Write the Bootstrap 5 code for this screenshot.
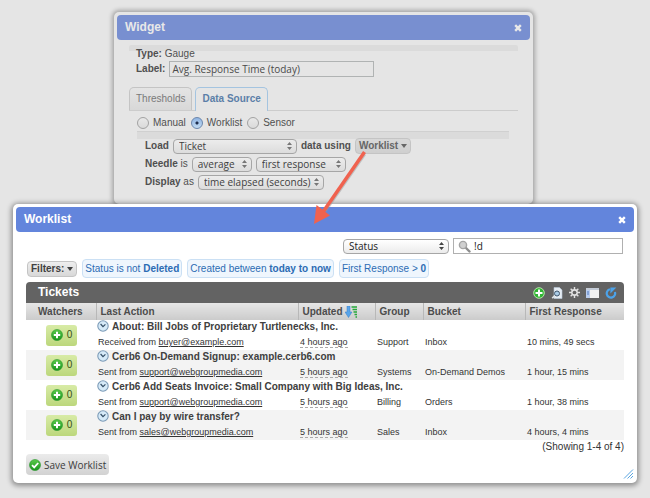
<!DOCTYPE html>
<html lang="en">
<head>
<meta charset="utf-8">
<meta name="viewport" content="width=device-width, initial-scale=1">
<title>Worklist</title>
<link href="https://cdn.jsdelivr.net/npm/bootstrap@5.3.0/dist/css/bootstrap.min.css" rel="stylesheet">
<style>
body{background:#e5e5e5;font:10px/14px "Liberation Sans",Arial,sans-serif;color:#505050}
.desk{padding:12px 13px 14px}
.win{border-radius:5px;padding:3px;box-shadow:0 1px 5px 2px rgba(0,0,0,.36)}
.win-widget{background:#e5e5e5;margin:0 104px 0 101px;padding:3px 3px 13px;box-shadow:0 0 4px 2px rgba(0,0,0,.28)}
.win-work{background:#fff}
.win-bar{height:25px;padding:0 8px;border-radius:4px;color:#fff;background:#6385dc}
.win-widget .win-bar{background:#788fd0;color:#e8e8e8}
.win-bar h2{font-size:12px;line-height:25px;font-weight:bold;margin:0}
.plain{border:0;background:none;padding:0;display:block;line-height:0}
.widget-body{padding:5px 12px 0}
.lines{padding:2px 7px 0;background:linear-gradient(#dbdbdb,#dbdbdb) no-repeat top/100% 6px;border-radius:2px}
.ui{font-family:"Open Sans","Noto Sans",sans-serif;font-size:10px}
.box-in{height:16px;border:1px solid #b0b3b3;border-radius:0;background:transparent;padding:0 2px;line-height:14px;color:#4a4a4a}
.w-label{width:205px}
.tabs{border-bottom:1px solid #ccc;gap:3px;margin-top:10px}
.tabs .nav-link{height:23px;line-height:22px;padding:0 6px;border:1px solid #c4c4c4;border-bottom:0;border-radius:5px 5px 0 0;color:#7a7a7a;background:linear-gradient(#e4e4e4,#d8d8d8);font-size:10px}
.tabs .nav-link.active{color:#5c7fa8;font-weight:bold;border-color:#a4c4e0;background:#e5e5e5;height:24px;margin-bottom:-1px}
.rad{appearance:none;width:12px;height:12px;margin:0 4px 0 0;border:1px solid #a2a2a2;border-radius:50%;background:linear-gradient(#e8e8e8,#dadada)}
.rad:checked{border-color:#6a86ac;background:radial-gradient(circle,#1d2d4c 0 1px,transparent 2px),linear-gradient(#8fb4e2,#c2dbf2)}
.radios{gap:5px;padding:4px 8px 0;height:20px}
.rules{margin:0 9px 0 8px;padding:5px 0 0;border-top:1px solid #d0d0d0;background:linear-gradient(#dbdbdb,#dbdbdb) no-repeat top/100% 7px}
.rule{height:18px;gap:4px;padding-left:8px}
.pick{appearance:none;height:15px;border:1px solid #a6a6a6;border-radius:4px;padding:0 12px 0 5px;line-height:13px;color:#3e3e3e;background:url("data:image/svg+xml,%3Csvg xmlns='http://www.w3.org/2000/svg' width='5' height='8'%3E%3Cpath d='M0 3L2.5 0 5 3zM0 5L2.5 8 5 5z' fill='%23777'/%3E%3C/svg%3E") no-repeat right 4px center,linear-gradient(#ececec,#dcdcdc)}
.win-work .pick{color:#222;background-image:url("data:image/svg+xml,%3Csvg xmlns='http://www.w3.org/2000/svg' width='5' height='8'%3E%3Cpath d='M0 3L2.5 0 5 3zM0 5L2.5 8 5 5z' fill='%23444'/%3E%3C/svg%3E"),linear-gradient(#fff,#ececec)}
.w-ticket{width:124px}.w-avg{width:60px}.w-first{width:90px}.w-time{width:126px}.w-status{width:106px}.w-search{width:170px}
.menu-btn{height:16px;border:1px solid #c4c4c4;border-radius:4px;background:linear-gradient(#d8d8d8,#cfcfcf);color:#666;font-weight:bold;line-height:14px;padding:0 3px}
.menu-btn::after{content:"";display:inline-block;border:3px solid transparent;border-top:4px solid currentColor;border-bottom:0;margin-left:3px;vertical-align:1px}
.win-work .menu-btn{background:linear-gradient(#eee,#d8d8d8);color:#404040;padding:0 3px}
.work-body{padding:6px 10px 0}
.search{position:relative;margin-right:1px}
.search svg{position:absolute;left:5px;top:2px}
.search .box-in{padding-left:20px;background:#fff;border-color:#b0b0b0;color:#222;display:block}
.filters{gap:5px;margin:5px 0 4px 1px}
.pill{height:19px;line-height:17px;border:1px solid #cbe0f4;border-radius:4px;background:#eff6fd;color:#2c6cb4;padding:0 2px;text-decoration:none}
.list-bar{height:21px;border-radius:4px 4px 0 0;background:#636363;color:#fff;padding:0 7px 0 12px}
.list-bar h3{font-size:12px;font-weight:bold;line-height:21px;margin:0}
.tools{gap:6px}
.tickets{table-layout:fixed;width:100%;font-size:9px;color:#333;line-height:14px}
.tickets th,.tickets td{padding:0 0 0 2px;white-space:nowrap;vertical-align:top}
.tickets thead th{height:17px;font-size:10px;color:#4c4c4c;background:linear-gradient(#e6e6e6,#cbcbcb);border-left:1px solid #b8b8b8;padding-left:4px;line-height:17px}
.tickets thead th:first-child{padding-left:12px;border-left:0}
.tickets tbody:nth-of-type(even){background:#f3f3f3}
.tickets tbody td,.tickets tbody th{height:15px}
.tickets .subj{font-size:10px;color:#404040;padding-left:1px}
.subj svg{vertical-align:-2px;margin-right:3px}
.tickets a{color:#333}
.tickets a:hover{color:#000}
.ago{border-bottom:1px dashed #aaa}
.c1{width:70px}.c3{width:77px}.c4{width:48px}.c5{width:102px}.c6{width:99px}
.tickets td.wcell{padding-left:20px;vertical-align:middle}
.watch{width:31px;height:21px;border:0;border-radius:3px;background:linear-gradient(#d8eba6,#bcd77c);color:#355018;font-size:10px;padding:0;gap:4px}
.save{height:21px;border:0;border-radius:4px;background:linear-gradient(#ebebeb,#d2d2d2);color:#3c3c3c;padding:0 3px;gap:3px}
.count{color:#333}
.grip{margin-top:-6px;height:11px;line-height:0}
.arrow{position:absolute;left:310px;top:145px;z-index:3;pointer-events:none}
.front{position:relative;z-index:1}
</style>
<script src="https://cdn.jsdelivr.net/npm/bootstrap@5.3.0/dist/js/bootstrap.bundle.min.js"></script>
</head>
<body>
<svg width="0" height="0" class="position-absolute" aria-hidden="true">
<defs>
<linearGradient id="gr" x2="0" y2="1"><stop stop-color="#5ccb4c"/><stop offset="1" stop-color="#17941c"/></linearGradient>
<symbol id="plus" viewBox="0 0 12 12"><circle cx="6" cy="6" r="5.5" fill="url(#gr)" stroke="#27922a" stroke-width=".6"/><path d="M6 2.8v6.4M2.8 6h6.4" stroke="#fff" stroke-width="2"/></symbol>
<symbol id="clock" viewBox="0 0 12 12"><circle cx="6" cy="6" r="5.2" fill="#d6eaf8" stroke="#7d9cb8" stroke-width="1.1"/><path d="M3.6 4L6 6.6 8.4 4.4" fill="none" stroke="#334d66" stroke-width="1.2"/></symbol>
<symbol id="close" viewBox="0 0 8 8"><path d="M1.2 1.2l5.6 5.6M6.8 1.2L1.2 6.8" stroke="currentColor" stroke-width="2.4"/></symbol>
</defs>
</svg>
<main class="desk position-relative">
<section class="win win-widget">
<header class="win-bar d-flex align-items-center justify-content-between"><h2>Widget</h2><button class="plain text-reset" aria-label="Close widget"><svg width="8" height="8"><use href="#close"/></svg></button></header>
<div class="widget-body">
<div class="lines">
<div><b>Type:</b> Gauge</div>
<div class="d-flex align-items-center"><label for="lbl" class="fw-bold me-1">Label:</label><input id="lbl" class="box-in ui w-label" value="Avg. Response Time (today)"></div>
</div>
<nav class="nav tabs"><a class="nav-link" href="#">Thresholds</a><a class="nav-link active" href="#" aria-current="page">Data Source</a></nav>
<div class="radios d-flex align-items-center">
<label class="d-flex align-items-center"><input class="rad" type="radio" name="src">Manual</label>
<label class="d-flex align-items-center"><input class="rad" type="radio" name="src" checked>Worklist</label>
<label class="d-flex align-items-center"><input class="rad" type="radio" name="src">Sensor</label>
</div>
<div class="rules">
<div class="rule d-flex align-items-center"><label for="load" class="fw-bold">Load</label><select id="load" class="pick ui w-ticket"><option>Ticket</option></select><b>data using</b><button class="menu-btn">Worklist</button></div>
<div class="rule d-flex align-items-center"><label for="needle"><b>Needle</b> is</label><select id="needle" class="pick ui w-avg"><option>average</option></select><select class="pick ui w-first" aria-label="Needle field"><option>first response</option></select></div>
<div class="rule d-flex align-items-center"><label for="disp"><b>Display</b> as</label><select id="disp" class="pick ui w-time"><option>time elapsed (seconds)</option></select></div>
</div>
</div>
</section>
<section class="win win-work front">
<header class="win-bar d-flex align-items-center justify-content-between"><h2>Worklist</h2><button class="plain text-reset" aria-label="Close worklist"><svg width="8" height="8"><use href="#close"/></svg></button></header>
<div class="work-body">
<div class="d-flex justify-content-end align-items-center gap-1">
<select class="pick ui w-status" aria-label="Search field"><option>Status</option></select>
<div class="search"><input class="box-in ui w-search" value="!d" aria-label="Search"><svg width="13" height="13" viewBox="0 0 13 13"><path d="M7.5 7.5l4 4" stroke="#8d8d8d" stroke-width="2.4" stroke-linecap="round"/><circle cx="5" cy="5" r="3.6" fill="#d0d0d0" stroke="#a4a4a4" stroke-width="1.4"/></svg></div>
</div>
<div class="filters d-flex align-items-center">
<button class="menu-btn">Filters:</button>
<a class="pill" href="#">Status is not <b>Deleted</b></a>
<a class="pill" href="#">Created between <b>today to now</b></a>
<a class="pill" href="#">First Response &gt; <b>0</b></a>
</div>
<div class="list-bar d-flex align-items-center justify-content-between"><h3>Tickets</h3>
<div class="tools d-flex align-items-center">
<button class="plain" aria-label="Add"><svg width="12" height="12" viewBox="0 0 12 12"><circle cx="6" cy="6" r="5.3" fill="#2fb432" stroke="#b5e8a8" stroke-width="1"/><path d="M6 2.5v7M2.5 6h7" stroke="#fff" stroke-width="2"/></svg></button>
<button class="plain" aria-label="Find"><svg width="12" height="12" viewBox="0 0 12 12"><path d="M3 .5h5.5l2.5 2.5v8.500H3z" fill="#e6edf4" stroke="#b8c8d8" stroke-width=".6"/><circle cx="6" cy="6.5" r="2.5" fill="#a9cbe6" stroke="#40566b"/><path d="M4 8.6L1.2 11.2" stroke="#dfe4e8" stroke-width="1.6"/></svg></button>
<button class="plain" aria-label="Settings"><svg width="11" height="11" viewBox="0 0 10 10"><path d="M5 0v10M0 5h10M1.5 1.5l7 7M8.5 1.5l-7 7" stroke="#e2e2e2" stroke-width="1.3"/><circle cx="5" cy="5" r="3.1" fill="#e2e2e2"/><circle cx="5" cy="5" r="1.7" fill="#636363"/></svg></button>
<button class="plain" aria-label="Columns"><svg width="13" height="10" viewBox="0 0 13 10"><path d="M0 0h13v10H0z" fill="#f2f2f2"/><path d="M0 0h13v2H0z" fill="#c4ccd8"/><path d="M0 2h4v8H0z" fill="#b9cdee"/><path d="M1 4h2M1 6h2" stroke="#4d76bd"/></svg></button>
<button class="plain" aria-label="Refresh"><svg width="12" height="12" viewBox="0 0 12 12"><path d="M5 2.3A4.2 4.2 0 1 0 9.9 5" fill="none" stroke="#4ca3ea" stroke-width="2.2"/><path d="M5.400 6.400V.4h6z" fill="#4ca3ea"/></svg></button>
</div></div>
<table class="tickets">
<colgroup><col class="c1"><col><col class="c3"><col class="c4"><col class="c5"><col class="c6"></colgroup>
<thead><tr><th>Watchers</th><th>Last Action</th><th>Updated <svg width="13" height="12" viewBox="0 0 13 12"><path d="M2 0h3v6h2L3.5 11.5 0 6h2z" fill="#58a5ea" stroke="#3a7fc8" stroke-width=".5"/><path d="M6.5 1H12M7.5 3.5H12M8.5 6H12M9.5 8.5H12M10.5 11H12" stroke="#25a83a" stroke-width="1.5"/></svg></th><th>Group</th><th>Bucket</th><th>First Response</th></tr></thead>
<tbody>
<tr><td rowspan="2" class="wcell"><button class="watch d-flex align-items-center justify-content-center"><svg width="12" height="12"><use href="#plus"/></svg>0</button></td><th colspan="5" class="subj"><svg width="12" height="12"><use href="#clock"/></svg>About: Bill Jobs of Proprietary Turtlenecks, Inc.</th></tr>
<tr><td>Received from <a href="#">buyer@example.com</a></td><td><span class="ago">4 hours ago</span></td><td>Support</td><td>Inbox</td><td>10 mins, 49 secs</td></tr>
</tbody>
<tbody>
<tr><td rowspan="2" class="wcell"><button class="watch d-flex align-items-center justify-content-center"><svg width="12" height="12"><use href="#plus"/></svg>0</button></td><th colspan="5" class="subj"><svg width="12" height="12"><use href="#clock"/></svg>Cerb6 On-Demand Signup: example.cerb6.com</th></tr>
<tr><td>Sent from <a href="#">support@webgroupmedia.com</a></td><td><span class="ago">5 hours ago</span></td><td>Systems</td><td>On-Demand Demos</td><td>1 hour, 15 mins</td></tr>
</tbody>
<tbody>
<tr><td rowspan="2" class="wcell"><button class="watch d-flex align-items-center justify-content-center"><svg width="12" height="12"><use href="#plus"/></svg>0</button></td><th colspan="5" class="subj"><svg width="12" height="12"><use href="#clock"/></svg>Cerb6 Add Seats Invoice: Small Company with Big Ideas, Inc.</th></tr>
<tr><td>Sent from <a href="#">support@webgroupmedia.com</a></td><td><span class="ago">5 hours ago</span></td><td>Billing</td><td>Orders</td><td>1 hour, 38 mins</td></tr>
</tbody>
<tbody>
<tr><td rowspan="2" class="wcell"><button class="watch d-flex align-items-center justify-content-center"><svg width="12" height="12"><use href="#plus"/></svg>0</button></td><th colspan="5" class="subj"><svg width="12" height="12"><use href="#clock"/></svg>Can I pay by wire transfer?</th></tr>
<tr><td>Sent from <a href="#">sales@webgroupmedia.com</a></td><td><span class="ago">5 hours ago</span></td><td>Sales</td><td>Inbox</td><td>4 hours, 4 mins</td></tr>
</tbody>
</table>
<div class="count text-end">(Showing 1-4 of 4)</div>
<button class="save ui d-flex align-items-center"><svg width="12" height="12" viewBox="0 0 12 12"><circle cx="6" cy="6" r="5.5" fill="url(#gr)" stroke="#27922a" stroke-width=".6"/><path d="M3 6.2l2.2 2.2L9.2 4" fill="none" stroke="#fff" stroke-width="1.8"/></svg>Save Worklist</button>
</div>
<div class="grip text-end"><svg width="11" height="10" viewBox="0 0 11 10"><path d="M1 9.5L10 .5M4.5 9.5L10 4M7.5 9.5L10 7" stroke="#5aa5e0"/></svg></div>
</section>
<svg class="arrow" width="65" height="85" viewBox="0 0 65 85" aria-hidden="true"><path d="M54.5 9L15 66" stroke="#999" stroke-opacity=".5" stroke-width="3.5"/><path d="M54.5 7L13 67" stroke="#f0624f" stroke-width="3.5"/><path d="M4 79L6.5 60 20 70.5z" fill="#f0624f"/></svg>
</main>
</body>
</html>
